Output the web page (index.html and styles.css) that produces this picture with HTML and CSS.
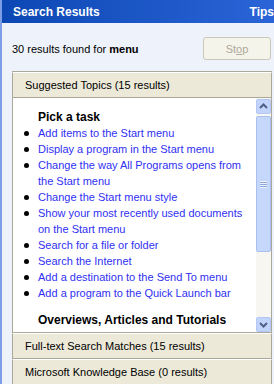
FILE: index.html
```html
<!DOCTYPE html>
<html lang="en">
<head>
	<meta charset="UTF-8">
	<title>Search Results</title>
	<link rel="stylesheet" href="styles.css">
</head>
<body>
	<div class="pane">
		<div class="titlebar">
			<span class="title">Search Results</span>
			<span class="tips">Tips</span>
		</div>
		<div class="summary">
			<span>30 results found for <b>menu</b></span>
			<button class="stop" disabled>St<u>o</u>p</button>
		</div>
		<div class="groups">
			<div class="group-head">Suggested Topics (15 results)</div>
			<div class="group-body">
				<div class="list">
					<h3>Pick a task</h3>
					<ul>
						<li><a href="#">Add items to the Start menu</a></li>
						<li><a href="#">Display a program in the Start menu</a></li>
						<li><a href="#">Change the way All Programs opens from the Start menu</a></li>
						<li><a href="#">Change the Start menu style</a></li>
						<li><a href="#">Show your most recently used documents on the Start menu</a></li>
						<li><a href="#">Search for a file or folder</a></li>
						<li><a href="#">Search the Internet</a></li>
						<li><a href="#">Add a destination to the Send To menu</a></li>
						<li><a href="#">Add a program to the Quick Launch bar</a></li>
					</ul>
					<h3>Overviews, Articles and Tutorials</h3>
					<ul class="plain">
						<li><a href="#">My Pictures folder overview</a></li>
					</ul>
				</div>
				<div class="scrollbar">
					<div class="sb-btn">
						<svg width="15" height="15" viewBox="0 0 15 15"><path d="M4 9 L7.5 5.5 L11 9" fill="none" stroke="#4d6185" stroke-width="2"/></svg>
					</div>
					<div class="sb-thumb">
						<div class="grip"></div>
					</div>
					<div class="sb-track"></div>
					<div class="sb-btn">
						<svg width="15" height="15" viewBox="0 0 15 15"><path d="M4 6 L7.5 9.5 L11 6" fill="none" stroke="#4d6185" stroke-width="2"/></svg>
					</div>
				</div>
			</div>
			<div class="group-head">Full-text Search Matches (15 results)</div>
			<div class="group-head">Microsoft Knowledge Base (0 results)</div>
		</div>
	</div>
</body>
</html>
```

FILE: styles.css
```css
*{
	margin: 0;
	padding: 0;
	box-sizing: border-box;
}
body{
	width: 274px;
	height: 384px;
	overflow: hidden;
	background: #eef3fb;
	font-family: "Liberation Sans", Arial, sans-serif;
	font-size: 11px;
	color: #000;
}
.pane{
	height: 384px;
	border-left: 2px solid #7c9fe6;
}
.titlebar{
	height: 23px;
	display: flex;
	align-items: center;
	justify-content: space-between;
	padding: 0 0 0 11px;
	background: linear-gradient(to right, #0c48b4, #2a64d6);
	color: #fff;
	font-weight: bold;
	font-size: 12px;
	white-space: nowrap;
}
.summary{
	height: 49px;
	display: flex;
	align-items: center;
	justify-content: space-between;
	padding: 2px 3px 0 10px;
	font-size: 11px;
}
.stop{
	width: 68px;
	height: 23px;
	background: #f5f4ea;
	border: 1px solid #c9c7ba;
	border-radius: 3px;
	color: #aca899;
	font-family: inherit;
	font-size: 11px;
}
.groups{
	margin: 0 2px 0 10px;
}
.group-head{
	height: 26px;
	display: flex;
	align-items: center;
	padding-left: 12px;
	background: #ece9d8;
	border: 1px solid #aca899;
	border-top-color: #fff;
	box-shadow: 0 -1px 0 #aca899;
	font-size: 11px;
	white-space: nowrap;
}
.group-body{
	height: 235px;
	display: flex;
	background: #fff;
	border: 1px solid #aca899;
	border-top: none;
	overflow: hidden;
}
.list{
	flex: 1;
	padding: 11px 4px 0 25px;
	font-size: 11px;
	line-height: 16px;
}
.list h3{
	font-size: 12px;
	line-height: 16px;
}
.list ul{
	list-style: none;
	margin-bottom: 11px;
}
.list li{
	position: relative;
}
.list li::before{
	content: "";
	position: absolute;
	left: -14px;
	top: 6px;
	width: 5px;
	height: 5px;
	border-radius: 50%;
	background: #000;
}
.list a{
	color: #3030f4;
	text-decoration: none;
}
.scrollbar{
	width: 15px;
	display: flex;
	flex-direction: column;
	background: #f7f6f0;
	padding-top: 1px;
}
.sb-btn{
	height: 15px;
	background: #c2d4fc;
	border: 1px solid #b2c7f3;
	border-radius: 2px;
}
.sb-btn svg{
	display: block;
	margin: -1px;
}
.sb-thumb{
	height: 136px;
	margin-top: 2px;
	background: #c6d7fc;
	border: 1px solid #a9bff0;
	border-radius: 2px;
	display: flex;
	align-items: center;
	justify-content: center;
}
.grip{
	width: 7px;
	height: 7px;
	background: repeating-linear-gradient(#eef3ff 0 1px, #8ca6e0 1px 2px);
}
.sb-track{
	flex: 1;
}
```
